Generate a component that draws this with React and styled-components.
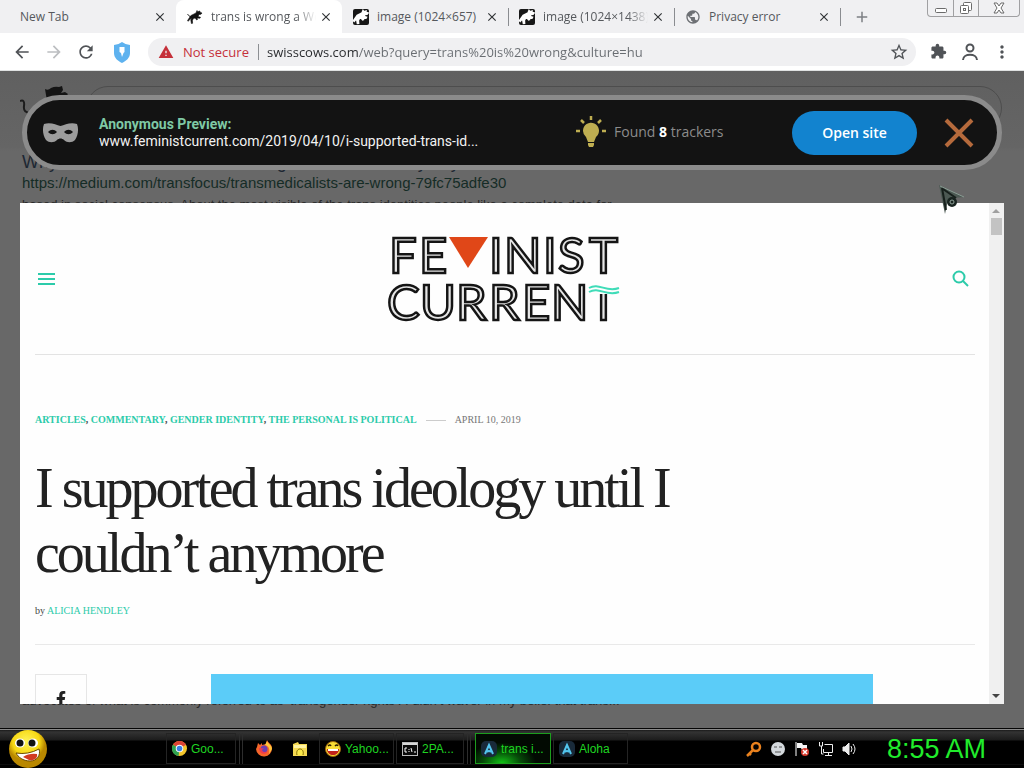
import React from 'react';
import styled, { createGlobalStyle, css } from 'styled-components';
import {
  MdArrowBack, MdArrowForward, MdRefresh, MdStarBorder, MdExtension,
  MdMoreVert, MdClose, MdAdd, MdWarning, MdPublic,
} from 'react-icons/md';
import { FaFacebookF } from 'react-icons/fa';

const Global = createGlobalStyle`
  *, *::before, *::after { box-sizing: border-box; }
  html, body, #root { height: 100%; }
  body { margin: 0; overflow: hidden; background: #000; }
  button { border: 0; padding: 0; background: none; font: inherit; color: inherit; cursor: pointer; }
  a { color: inherit; text-decoration: none; }
  svg { display: block; flex: none; }
`;

const ui = '"Open Sans", "Noto Sans", sans-serif';
const arial = '"Liberation Sans", Arial, sans-serif';
const serif = '"Liberation Serif", "Times New Roman", serif';

const Desktop = styled.div`
  height: 100%;
  display: flex;
  flex-direction: column;
  font-family: ${ui};
`;

/* Browser window */
const TabStrip = styled.div`
  flex: none;
  display: flex;
  height: 33px;
  background: #f0f0f2;
`;
const Tab = styled.div`
  flex: 0 1 ${(p) => (p.$first ? 176 : 166)}px;
  min-width: 0;
  display: flex;
  align-items: center;
  gap: 8px;
  padding: 0 8px 0 ${(p) => (p.$first ? 20 : 11)}px;
  font-size: 12px;
  color: #55585c;
  background: ${(p) => (p.$active ? '#fff' : 'none')};
  border-radius: ${(p) => (p.$active ? '8px 8px 0 0' : '0')};
`;
const TabTitle = styled.span`
  flex: 1;
  min-width: 0;
  margin-right: -6px;
  overflow: hidden;
  white-space: nowrap;
  line-height: 18px;
  ${(p) => p.$fade && css`
    mask-image: linear-gradient(to left, transparent, #000 20px);
  `}
`;
const TabClose = styled.button`
  display: grid;
  place-items: center;
  width: 16px;
  height: 16px;
  color: #303336;
  font-size: 14px;
`;
const TabDivider = styled.span`
  flex: none;
  align-self: center;
  width: 1px;
  height: 18px;
  margin-right: -1px;
  background: #8a8c90;
`;
const NewTab = styled.button`
  display: grid;
  place-items: center;
  width: 44px;
  font-size: 18px;
  color: #7c7f84;
`;
const WindowControls = styled.div`
  display: flex;
  flex: none;
  height: 17px;
  margin: 0 4px 0 auto;
  border: 1px solid #a0a0a2;
  border-top: 0;
  border-radius: 0 0 4px 4px;
`;
const WindowButton = styled.button`
  display: grid;
  place-items: center;
  width: ${(p) => (p.$wide ? 41 : 25)}px;
  & + & { border-left: 1px solid #a0a0a2; }
`;
const Toolbar = styled.div`
  flex: none;
  display: flex;
  align-items: center;
  gap: 12px;
  height: 38px;
  padding: 0 12px;
  background: #fff;
  border-bottom: 1px solid #dfe1e1;
`;
const ToolButton = styled.button`
  display: grid;
  place-items: center;
  flex: none;
  width: 20px;
  height: 20px;
  font-size: 20px;
  color: ${(p) => (p.$muted ? '#bcbec1' : '#505357')};
`;
const Shield = styled(ToolButton)`margin: 0 4px;`;
const Omnibox = styled.div`
  flex: 1;
  min-width: 0;
  display: flex;
  align-items: center;
  gap: 8px;
  height: 28px;
  padding: 0 7px 0 10px;
  border-radius: 14px;
  background: #f0f0f2;
`;
const Warning = styled.label`
  display: flex;
  align-items: center;
  gap: 9px;
  font-size: 13px;
  color: #c5303a;
  white-space: nowrap;
  &::after { content: ''; width: 1px; height: 16px; background: #8c8f93; }
`;
const Address = styled.input`
  flex: 1;
  min-width: 0;
  height: 24px;
  border: 0;
  padding: 0;
  outline: 0;
  font: 13px ${ui};
  color: transparent;
  background: linear-gradient(to right, #26282b 92px, #686c71 92px) text;
`;

/* Search results behind the preview */
const Viewport = styled.main`
  position: relative;
  flex: 1;
  min-height: 0;
  overflow: hidden;
  background: #686868;
`;
const Results = styled.div`
  height: 100%;
  display: flex;
  flex-direction: column;
  padding: 15px 22px 0 20px;
  color: #292929;
  white-space: nowrap;
  background: linear-gradient(#606060, #656565 76px, #686868 80px);
`;
const SearchRow = styled.div`
  display: flex;
  gap: 16px;
`;
const SearchOutline = styled.div`
  flex: 1;
  height: 44px;
  border: 1px solid #4d4d4d;
  border-radius: 22px;
`;
const ResultTitle = styled.h2`
  margin: 17px 0 0 2px;
  font: 18px/22px ${arial};
  color: #1d2733;
`;
const ResultUrl = styled.span`
  margin-left: 2px;
  font: 15px/20px ${arial};
  color: #152c26;
`;
const Snippet = styled.p`
  margin: ${(p) => (p.$last ? 'auto 0 17px 2px' : '2px 0 0 2px')};
  font: 13px/20px ${arial};
`;

/* Anonymous preview */
const Overlay = styled.div`
  position: absolute;
  inset: 0;
  display: flex;
  flex-direction: column;
  gap: 33px;
  padding: 24px 20px;
`;
const PreviewBar = styled.header`
  flex: none;
  display: flex;
  align-items: center;
  height: 75px;
  margin: 0 2px;
  padding: 0 23px 0 15px;
  border: 5px solid #8b8b8b;
  border-radius: 38px;
  background: #131313;
  color: #f2f2f2;
`;
const PreviewText = styled.div`
  flex: 1 1 0;
  min-width: 0;
  margin-left: 20px;
  font: 14px/17px Roboto, ${ui};
  white-space: nowrap;
  strong { display: block; color: #7fc9a5; }
`;
const Trackers = styled.p`
  flex: none;
  display: flex;
  align-items: center;
  gap: 8px;
  width: 216px;
  margin: 0;
  padding-bottom: 2px;
  font-size: 14px;
  color: #8c8c8c;
  b { color: #fff; }
`;
const OpenSite = styled.button`
  flex: none;
  width: 125px;
  height: 44px;
  border-radius: 22px;
  background: #1283cf;
  color: #fff;
  font: 600 14px ${ui};
`;
const ClosePreview = styled.button`margin-left: 27px;`;

const Frame = styled.section`
  flex: 1;
  min-height: 0;
  display: flex;
  overflow: hidden;
  background: #fefefe;
`;
const Article = styled.article`
  flex: 1;
  min-width: 0;
  overflow: hidden;
  padding: 0 14px 0 15px;
  font-family: ${serif};
  color: #222;
`;
const Masthead = styled.header`
  display: flex;
  align-items: center;
  justify-content: space-between;
  height: 152px;
  padding: 0 6px 0 3px;
  border-bottom: 1px solid #e3e3e3;
  svg text {
    font-family: Lato, sans-serif;
    font-size: 49px;
    fill: #e6e6e6;
    stroke: #151515;
    stroke-width: 2.5px;
  }
`;
const Meta = styled.div`
  display: flex;
  align-items: center;
  gap: 9px;
  margin-top: 57px;
  font-size: 10px;
  line-height: 16px;
  white-space: nowrap;
  text-transform: uppercase;
  color: #777;
  &>span { font-weight: 700; color: #444; }
  hr { width: 20px; margin: 0; border: 0; border-top: 1px solid #ccc; }
`;
const TopicLink = styled.a`color: #2ccbaa;`;
const Headline = styled.h1`
  max-width: 700px;
  margin: 28px 0 0;
  font: 56px/65px ${serif};
  letter-spacing: -3px;
  color: #222;
`;
const Byline = styled.p`
  margin: 17px 0 0;
  padding-bottom: 25px;
  font-size: 10px;
  line-height: 16px;
  color: #444;
  border-bottom: 1px solid #e9e9e9;
`;
const Media = styled.div`
  display: flex;
  margin-top: 29px;
`;
const Share = styled.button`
  display: grid;
  place-items: center;
  width: 52px;
  height: 50px;
  border: 1px solid #e6e6e6;
  font-size: 16px;
  color: #222;
`;
const Photo = styled.div`
  flex: 1;
  height: 360px;
  margin: 0 102px 0 124px;
  background: #5bccf8;
`;
const Scrollbar = styled.div`
  flex: none;
  display: flex;
  flex-direction: column;
  align-items: center;
  width: 15px;
  padding: 6px 0;
  background: #f0f0f0;
`;
const Thumb = styled.div`
  width: 11px;
  height: 17px;
  margin: 5px 0 auto;
  background: #c3c3c3;
`;
const Cursor = styled.svg`
  position: absolute;
  top: 113px;
  right: 58px;
`;

/* Taskbar */
const Taskbar = styled.footer`
  flex: none;
  display: flex;
  align-items: center;
  height: 40px;
  padding: 0 8px;
  border-top: 1px solid #050505;
  background: linear-gradient(#8a8a8a 1px, #1a1a1a 1px, #333 3px, #1c1c1c 11px, #000 12px, #000 35px, #1a1a1a 35px, #000 36px);
  font: 12px ${arial};
  color: #1fd522;
`;
const Group = styled.div`
  display: flex;
  align-items: center;
  gap: 2px;
  padding-right: 3px;
  margin-right: 4px;
  border-right: 4px double #2d2d2d;
  &:last-of-type { border: 0; }
`;
const Windows = styled.div`
  display: flex;
  gap: 2px;
`;
const StartButton = styled.button`margin-right: 118px;`;
const TaskButton = styled.button`
  display: flex;
  align-items: center;
  gap: 4px;
  width: ${(p) => p.$width}px;
  height: 31px;
  padding-left: 5px;
  border: 1px solid #242424;
  white-space: nowrap;
  ${(p) => p.$active && css`
    border-color: #1c9d1d;
    background: radial-gradient(ellipse at 35% 100%, #12c416, #064a08 28%, #020a02 50%);
  `}
`;
const QuickButton = styled.button`
  display: grid;
  place-items: center;
  width: 34px;
`;
const Tray = styled.div`
  display: flex;
  align-items: center;
  gap: 8px;
  margin-left: auto;
`;
const Clock = styled.time`
  margin: 0 30px 0 21px;
  font: 27px/32px ${arial};
  color: #20ec2c;
  white-space: nowrap;
`;

const cowPath = 'M4 6.500l5-2.500 1-2.500.8 1.200L13 2l-.2 1.200L15 4l-1 1.200-2 .3-1 2 2.500.8-.5.9-3-.2.500 1.500-.9.4-1.400-1.900-1.800.5-1 2 .2 2.800-1.200.2-.6-3.500 1-2-2 1.500-1.600 1.800-.7-.7z';
const CowMark = () => (
  <svg width="16" height="16" viewBox="0 0 16 16" fill="#111">
    <path d={cowPath} stroke="#111" strokeWidth=".6" />
    <path d="M4 7C2 9 2 5 .5 5.500" fill="none" stroke="#111" strokeWidth="1" />
  </svg>
);
const CowTile = () => (
  <svg width="16" height="16" viewBox="0 0 16 16">
    <rect width="16" height="16" rx="2" fill="#171717" />
    <path d={cowPath} fill="#fff" stroke="#fff" strokeWidth="1.500" />
  </svg>
);
const CowLogo = () => (
  <svg width="50" height="48" viewBox="0 0 50 48">
    <path d="M25 3q3 2 6-1 4-2 8-1l3-1 1 4-2 3 4-1 3 2-5 6-6 8-14 8-9-2q2-11 13-13z" fill="#141414" />
    <path d="M0 15q5-2 4 5t7 7" fill="none" stroke="#1c1c1c" strokeWidth="2" />
  </svg>
);
const Mask = () => (
  <svg width="37" height="20" viewBox="0 0 37 20">
    <path fillRule="evenodd" fill="#9c9c9c" d="M2 1C9-1 14 2 18.500 3 23 2 28-1 35 1c2 5 1 12-2 16-3 3-8 3-11 0-2-2-5-2-7 0-3 3-8 3-11 0C1 13 0 6 2 1zM6 9c3 3 6 3 9 0-3-3-6-3-9 0zm16 0c3 3 6 3 9 0-3-3-6-3-9 0z" />
  </svg>
);
const Bulb = () => (
  <svg width="30" height="32" viewBox="0 0 30 32" fill="#bfae51">
    <path d="M7 15a8 8 0 1 1 13 6l-2 5h-6l-2-5a8 8 0 0 1-3-6zM12 27h6v2l-1 2h-4l-1-2z" />
    <path d="M15 0v4M5 4l3 3M25 4l-3 3M0 15h4M26 15h4" stroke="#bfae51" strokeWidth="2.500" />
  </svg>
);
const Logo = () => (
  <svg width="236" height="90" viewBox="0 0 236 90" role="img" aria-label="Feminist Current">
    <text y="39" x="3 33">FE</text>
    <path d="M63 3h39L82 34z" fill="#e04718" />
    <text y="39" x="103 118 157 172 203">INIST</text>
    <text y="86" x="1 34 70 103 136 165 203">CURRENT</text>
    <path d="M202 47h33v13h-33z" fill="#fefefe" />
    <path d="M203 54c10-6 17 5 30 0M203 58c10-6 17 5 30 0" fill="none" stroke="#3fdcb8" strokeWidth="2" />
  </svg>
);
const Smiley = () => (
  <svg width="40" height="38" viewBox="0 0 40 38">
    <defs>
      <radialGradient id="face" cx=".45" cy=".3"><stop offset="0" stopColor="#fff45a" /><stop offset=".7" stopColor="#f7d813" /><stop offset="1" stopColor="#b98800" /></radialGradient>
    </defs>
    <ellipse cx="20" cy="19" rx="19" ry="19" fill="url(#face)" />
    <ellipse cx="12" cy="13" rx="5" ry="4.500" fill="#fff" /><ellipse cx="25" cy="13" rx="5" ry="4.500" fill="#fff" />
    <circle cx="12" cy="13" r="3.500" fill="#111" /><circle cx="24" cy="13" r="3.500" fill="#111" />
    <path d="M8 23q12 2 23-4c2 6-2 12-9 12S10 27 8 23z" fill="#fff" stroke="#6b4b00" />
    <path d="M15 27q6-4 14-3c1 5-4 7-8 6z" fill="#d33a22" />
  </svg>
);
const ChromeIcon = () => (
  <svg width="15" height="15" viewBox="0 0 16 16">
    <circle cx="8" cy="8" r="8" fill="#f3c52c" />
    <path d="M8 8L1 4a8 8 0 0 1 14 0z" fill="#dc4335" />
    <path d="M8 8L1 4a8 8 0 0 0 6 12z" fill="#2fa150" />
    <circle cx="8" cy="8" r="4" fill="#fff" /><circle cx="8" cy="8" r="3" fill="#397fe3" />
  </svg>
);
const FirefoxIcon = () => (
  <svg width="17" height="17" viewBox="0 0 17 17">
    <path d="M1 7l1-4 2 2 2-2v2l4-1 1-4c1 3 5 4 5 8a8 8 0 0 1-16 1z" fill="#f5662a" />
    <path d="M11 1c1 3 5 4 5 8l-3 5c1-5 0-8-4-9z" fill="#ffc63a" />
    <circle cx="8" cy="9" r="3.500" fill="#6c3fb2" />
    <path d="M3 8c2 0 3 1 5 0l-2 2c1 3 4 2 6 1-3 5-9 3-9-3z" fill="#ee3d4d" />
  </svg>
);
const FolderIcon = () => (
  <svg width="16" height="16" viewBox="0 0 16 16">
    <path d="M1 3l5-2 1 2h8v12H1z" fill="#f5d951" /><path d="M2 4h12v3H2z" fill="#fff3a2" />
    <path d="M5 14c-1-4 1-6 3-6s4 2 3 6" fill="#fbe94a" stroke="#7e6b00" />
  </svg>
);
const YahooIcon = () => (
  <svg width="16" height="16" viewBox="0 0 16 16">
    <circle cx="8" cy="8" r="7.500" fill="#f9dc35" stroke="#9b640a" />
    <path d="M3 5q2-2 3 0M10 5q2-2 3 0" fill="none" stroke="#2b1b00" strokeWidth="1.500" />
    <path d="M2 8h12c0 8-12 8-12 0z" fill="#c1221c" /><path d="M3 8h10v2H3z" fill="#fff" />
  </svg>
);
const ConsoleIcon = () => (
  <svg width="16" height="14" viewBox="0 0 16 14">
    <rect x=".5" y=".5" width="15" height="13" fill="#0b0b0b" stroke="#b9b9b9" />
    <rect x="1" y="1" width="14" height="2" fill="#d8d8d8" />
    <path d="M5 6H3v4h2M7 7v1m0 1v1M9 6l1 4M12 10h2" fill="none" stroke="#fff" />
  </svg>
);
const AlohaIcon = () => (
  <svg width="16" height="16" viewBox="0 0 16 16">
    <rect width="16" height="16" rx="5" fill="#192a3a" />
    <path d="M4 13l4-9 4 9M6 11q2-2 4 0" fill="none" stroke="#53c5ee" strokeWidth="2" />
  </svg>
);
const trayIcons = [
  ['Search', <g key="a" fill="none" stroke="#e8811e" strokeWidth="2.500"><circle cx="10" cy="6" r="4" /><path d="M7 9l-6 6M3 12l2 2" /></g>],
  ['Messenger', <g key="b"><circle cx="8" cy="8" r="7" fill="#d3d8dc" /><path d="M4 6h3M9 6h3M5 11h6" stroke="#555" /></g>],
  ['Action Center', <g key="c"><path d="M2 1v14" stroke="#fff" /><path d="M3 2h5l1 2h4v5H8L7 7H3z" fill="#f5f5f5" /><circle cx="11" cy="11" r="4" fill="#d6392c" /><path d="M9 9l4 4M13 9l-4 4" stroke="#fff" strokeWidth="1.500" /></g>],
  ['Network', <g key="d" fill="none" stroke="#eee"><path d="M6.500 3.500h8v8h-9V8M7 14.500h7M10.500 11v3M1.500 1v4h3V1M3.500 5v8h2" /></g>],
  ['Volume', <g key="e" fill="none" stroke="#eee"><path d="M1 6h2l4-4v12l-4-4H1z" fill="#eee" /><path d="M9 5q2 3 0 6M11 3q4 5 0 10" /></g>],
];

const tabs = [
  { title: 'New Tab', first: true },
  { title: 'trans is wrong a Web', icon: <CowMark />, active: true, fade: true },
  { title: 'image (1024×657)', icon: <CowTile />, divider: true },
  { title: 'image (1024×1438)', icon: <CowTile />, divider: true, fade: true },
  { title: 'Privacy error', icon: <MdPublic size={16} color="#6d7074" />, divider: true },
];
const topics = ['Articles', 'Commentary', 'Gender Identity', 'The Personal is Political'];

export default function App() {
  return (
    <Desktop>
      <Global />
      <TabStrip>
        {tabs.map((t) => (
          <React.Fragment key={t.title}>
            <Tab $active={t.active} $first={t.first}>
              {t.icon}
              <TabTitle $fade={t.fade}>{t.title}</TabTitle>
              <TabClose aria-label={`Close ${t.title}`}><MdClose /></TabClose>
            </Tab>
            {t.divider && <TabDivider />}
          </React.Fragment>
        ))}
        <NewTab aria-label="New tab"><MdAdd /></NewTab>
        <WindowControls>
          <WindowButton aria-label="Minimize">
            <svg width="12" height="16" viewBox="0 0 12 16"><rect x=".5" y="8.500" width="11" height="4" rx="1" fill="#fff" stroke="#6b6b6b" /></svg>
          </WindowButton>
          <WindowButton aria-label="Restore">
            <svg width="14" height="16" viewBox="0 0 14 16" fill="#fff" stroke="#6b6b6b"><rect x="4.500" y="2.500" width="8" height="8" rx="1" /><rect x="1.500" y="5.500" width="8" height="8" rx="1" /><rect x="4.500" y="8.500" width="2" height="2" /></svg>
          </WindowButton>
          <WindowButton $wide aria-label="Close window">
            <svg width="12" height="12" viewBox="0 0 12 12" fill="#fff" stroke="#6b6b6b"><path d="M1 1h3l2 3 2-3h3L8 6l3 5H8L6 8l-2 3H1l3-5z" /></svg>
          </WindowButton>
        </WindowControls>
      </TabStrip>
      <Toolbar>
        <ToolButton aria-label="Back"><MdArrowBack /></ToolButton>
        <ToolButton $muted aria-label="Forward"><MdArrowForward /></ToolButton>
        <ToolButton aria-label="Reload"><MdRefresh /></ToolButton>
        <Shield aria-label="Protection">
          <svg width="18" height="21" viewBox="0 0 18 21"><path d="M9 0q4 3 8 3v8c0 5-4 8-8 10-4-2-8-5-8-10V3q4 0 8-3z" fill="#5eb2ef" /><path d="M6.500 5h5v5l-1 1-1.500 4-1-4-1.500-1z" fill="#fff" /></svg>
        </Shield>
        <Omnibox>
          <Warning htmlFor="address"><MdWarning size={16} />Not secure</Warning>
          <Address id="address" defaultValue="swisscows.com/web?query=trans%20is%20wrong&culture=hu" />
          <ToolButton aria-label="Bookmark"><MdStarBorder /></ToolButton>
        </Omnibox>
        <ToolButton aria-label="Extensions"><MdExtension size={17} /></ToolButton>
        <ToolButton aria-label="Profile">
          <svg width="18" height="18" viewBox="0 0 18 18" fill="none" stroke="#505357" strokeWidth="2"><circle cx="9" cy="5" r="3.500" /><path d="M2 17c0-7 14-7 14 0" /></svg>
        </ToolButton>
        <ToolButton aria-label="Menu"><MdMoreVert /></ToolButton>
      </Toolbar>

      <Viewport>
        <Results>
          <SearchRow>
            <CowLogo />
            <SearchOutline />
          </SearchRow>
          <ResultTitle>Why Transmedicalists Are Wrong — Transfocus by Jay</ResultTitle>
          <ResultUrl>https://medium.com/transfocus/transmedicalists-are-wrong-79fc75adfe30</ResultUrl>
          <Snippet>based in social consensus. About the most visible of the trans identities people like a complete data for</Snippet>
          <Snippet $last>advocates of what is commonly referred to as ‘transgender rights’. I didn’t waver in my belief that trans...</Snippet>
        </Results>

        <Overlay>
          <PreviewBar>
            <Mask />
            <PreviewText>
              <strong>Anonymous Preview:</strong>
              www.feministcurrent.com/2019/04/10/i-supported-trans-id...
            </PreviewText>
            <Trackers><Bulb /><span>Found <b>8</b> trackers</span></Trackers>
            <OpenSite>Open site</OpenSite>
            <ClosePreview aria-label="Close preview">
              <svg width="30" height="30" viewBox="0 0 30 30" stroke="#b56a3c" strokeWidth="4"><path d="M2 2l26 26M28 2L2 28" /></svg>
            </ClosePreview>
          </PreviewBar>

          <Frame>
            <Article>
              <Masthead>
                <button aria-label="Menu">
                  <svg width="17" height="12" viewBox="0 0 17 12" stroke="#2ccbaa" strokeWidth="2"><path d="M0 1h17M0 6h17M0 11h17" /></svg>
                </button>
                <Logo />
                <button aria-label="Search">
                  <svg width="17" height="17" viewBox="0 0 17 17" fill="none" stroke="#2ccbaa" strokeWidth="2"><circle cx="7" cy="7" r="5.500" /><path d="M11 11l5 5" /></svg>
                </button>
              </Masthead>
              <Meta>
                <span>
                  {topics.map((t, i) => (
                    <React.Fragment key={t}>{i > 0 && ', '}<TopicLink href="#topic">{t}</TopicLink></React.Fragment>
                  ))}
                </span>
                <hr />
                <time dateTime="2019-04-10">April 10, 2019</time>
              </Meta>
              <Headline>I supported trans ideology until I couldn’t anymore</Headline>
              <Byline>by <TopicLink href="#author">ALICIA HENDLEY</TopicLink></Byline>
              <Media>
                <Share aria-label="Share on Facebook"><FaFacebookF /></Share>
                <Photo />
              </Media>
            </Article>
            <Scrollbar>
              <svg width="9" height="4" viewBox="0 0 9 4"><path d="M0 4l4-4 4 4z" fill="#a0a0a0" /></svg>
              <Thumb />
              <svg width="9" height="4" viewBox="0 0 9 4"><path d="M0 0l4 4 4-4z" fill="#444" /></svg>
            </Scrollbar>
          </Frame>
        </Overlay>
        <Cursor width="27" height="32" viewBox="0 0 27 32">
          <path d="M0 1l25 12-11 1-5 2-3 14z" fill="#4c5953" /><path d="M1 2l24 11" stroke="#8b9c94" /><path d="M3 4l4 22M4 5l13 9" stroke="#17201c" strokeWidth="2" />
          <circle cx="13" cy="18" r="5" fill="#18231f" /><circle cx="13" cy="18" r="2" fill="none" stroke="#91a39b" />
        </Cursor>
      </Viewport>

      <Taskbar>
        <StartButton aria-label="Start"><Smiley /></StartButton>
        <Group>
          <TaskButton $width={70}><ChromeIcon />Goo...</TaskButton>
        </Group>
        <Group>
          <QuickButton aria-label="Firefox"><FirefoxIcon /></QuickButton>
          <QuickButton aria-label="Explorer"><FolderIcon /></QuickButton>
          <TaskButton $width={75}><YahooIcon />Yahoo...</TaskButton>
          <TaskButton $width={68}><ConsoleIcon />2PA...</TaskButton>
        </Group>
        <Windows>
          <TaskButton $width={76} $active><AlohaIcon />trans i...</TaskButton>
          <TaskButton $width={75}><AlohaIcon />Aloha</TaskButton>
        </Windows>
        <Tray>
          {trayIcons.map(([name, art]) => (
            <button key={name} aria-label={name}><svg width="16" height="16" viewBox="0 0 16 16">{art}</svg></button>
          ))}
          <Clock>8:55 AM</Clock>
        </Tray>
      </Taskbar>
    </Desktop>
  );
}
